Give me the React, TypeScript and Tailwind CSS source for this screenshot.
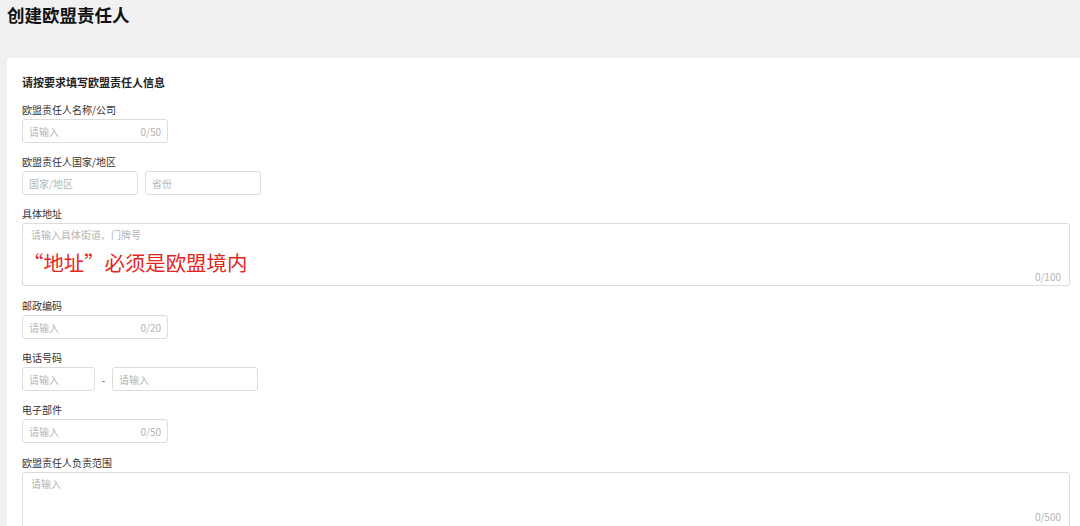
import React from "react";

const font = { fontFamily: '"Noto Sans CJK SC", "Noto Sans", sans-serif' };

function Label({ children }: { children: React.ReactNode }) {
  return <div className="h-[14px] leading-[14px] text-[10px] text-[#333] mb-[2px]">{children}</div>;
}

function Input({ w, counter, placeholder = "请输入" }: { w: string; counter?: string; placeholder?: string }) {
  return (
    <div className={`${w} h-[24px] border border-[#dcdcdc] rounded-[3px] bg-white flex items-center justify-between px-[6px]`}>
      <span className="text-[10px] text-[#b5b5b5]">{placeholder}</span>
      {counter && <span className="text-[10px] text-[#b5b5b5]">{counter}</span>}
    </div>
  );
}

export default function App() {
  return (
    <div className="w-[1080px] h-[526px] overflow-hidden bg-[#f0f0f3]" style={font}>
      <div className="h-[58px] pl-[7px] pt-[3px]">
        <div className="text-[17.5px] leading-[24px] font-bold text-[#111]">创建欧盟责任人</div>
      </div>
      <div className="ml-[7px] bg-white rounded-tl-[3px] pl-[15px] pr-[10px] pt-[17px] h-[468px]">
        <div className="h-[14px] leading-[14px] text-[11px] font-bold text-[#222]">请按要求填写欧盟责任人信息</div>
        <div className="mt-[14px] flex flex-col gap-[12px]">
          <div>
            <Label>欧盟责任人名称/公司</Label>
            <Input w="w-[146px]" counter="0/50" />
          </div>
          <div>
            <Label>欧盟责任人国家/地区</Label>
            <div className="flex gap-[7px]">
              <Input w="w-[116px]" placeholder="国家/地区" />
              <Input w="w-[116px]" placeholder="省份" />
            </div>
          </div>
          <div>
            <Label>具体地址</Label>
            <div className="relative h-[63px] border border-[#dcdcdc] rounded-[3px] bg-white pl-[8px] pt-[4px]">
              <div className="text-[10px] leading-[14px] text-[#b5b5b5]">请输入具体街道、门牌号</div>
              <div className="absolute left-[0px] top-[25px] text-[20.4px] leading-[26px] text-[#e3261e]">“地址”必须是欧盟境内</div>
              <span className="absolute right-[8px] bottom-[1px] text-[10px] leading-[14px] text-[#b5b5b5]">0/100</span>
            </div>
          </div>
          <div className="mt-[1px]">
            <Label>邮政编码</Label>
            <Input w="w-[146px]" counter="0/20" />
          </div>
          <div>
            <Label>电话号码</Label>
            <div className="flex items-center">
              <Input w="w-[73px]" />
              <span className="w-[17px] text-center text-[10px] text-[#555]">-</span>
              <Input w="w-[146px]" />
            </div>
          </div>
          <div>
            <Label>电子部件</Label>
            <Input w="w-[146px]" counter="0/50" />
          </div>
          <div className="mt-[1px]">
            <Label>欧盟责任人负责范围</Label>
            <div className="relative h-[80px] border border-[#dcdcdc] rounded-[3px] bg-white pl-[8px] pt-[4px]">
              <div className="text-[10px] leading-[14px] text-[#b5b5b5]">请输入</div>
              <span className="absolute right-[8px] top-[37px] text-[10px] leading-[14px] text-[#b5b5b5]">0/500</span>
            </div>
          </div>
        </div>
      </div>
    </div>
  );
}
